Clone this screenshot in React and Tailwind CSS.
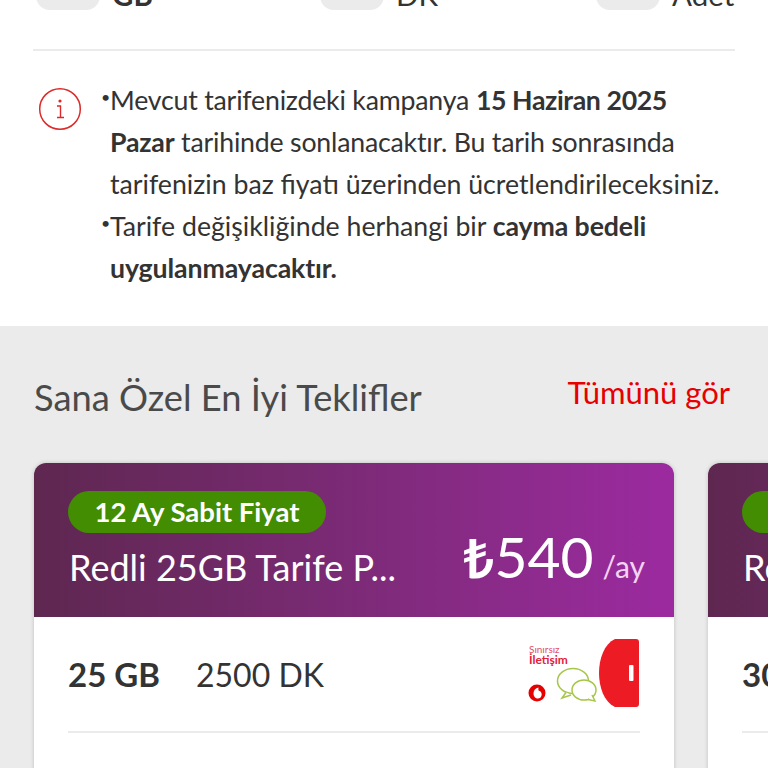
const FONT = 'font-["Lato","Noto_Sans",sans-serif]';

const STATS = [
  { id: 'gb', label: 'GB', bold: true, left: 'w-[284px]' },
  { id: 'dk', label: 'DK', bold: false, left: 'w-[276px]' },
  { id: 'adet', label: 'Adet', bold: false, left: 'w-auto' },
];

function InfoIcon() {
  return (
    <svg width="44" height="44" viewBox="0 0 44 44" fill="none" className="shrink-0">
      <circle cx="22" cy="22" r="20.3" stroke="#dc2a2a" strokeWidth="1.5" />
      <circle cx="22" cy="14" r="1.6" fill="#dc2a2a" />
      <path d="M19 19h3.5v11.5M19 30.5h7" stroke="#dc2a2a" strokeWidth="1.4" />
    </svg>
  );
}

function PlanArt() {
  return (
    <div className="relative w-[112px] h-[72px] shrink-0">
      <div className="absolute left-[1px] top-[6px] text-[10px] leading-[10px] text-[#e4506a]">Sınırsız</div>
      <div className="absolute left-[1px] top-[16px] text-[12px] leading-[12px] font-bold text-[#e4203a]">İletişim</div>
      <svg width="112" height="72" viewBox="0 0 112 72" fill="none" className="absolute left-0 top-0">
        <circle cx="9" cy="55" r="8.500" fill="#e60000" />
        <path d="M10.500 49.500c-3 .5-5 3-5 6 0 2.800 1.800 5 4.200 5 2.300 0 4-1.900 4-4.100 0-2.200-1.400-3.500-3.200-3.900-.2-1.100-.2-2.200 0-3z" fill="#fff" />
        <ellipse cx="45" cy="43" rx="15.500" ry="12.500" stroke="#a8c64a" strokeWidth="1.500" fill="#fff" />
        <path d="M38 54.500 34 60l9-3" stroke="#a8c64a" strokeWidth="1.500" fill="#fff" />
        <ellipse cx="56" cy="52" rx="12" ry="10" stroke="#a8c64a" strokeWidth="1.500" fill="#fff" />
        <path d="M60 61.500 67 63l-3-6" stroke="#a8c64a" strokeWidth="1.500" fill="#fff" />
        <path d="M87 1h21a3 3 0 0 1 3 3v62a3 3 0 0 1-3 3H87C76 64 71 49 71 35S76 6 87 1z" fill="#ed1c24" />
        <rect x="101" y="27" width="4.500" height="16" rx="1" fill="#fff" />
      </svg>
    </div>
  );
}

function PlanCard({ name, price, gb, dk, className }) {
  return (
    <div className={`shrink-0 h-[400px] bg-white rounded-t-xl overflow-hidden shadow-[0_0_4px_rgba(0,0,0,0.18)] ${className}`}>
      <div className="h-[154px] pl-[35px] pr-[29px] pt-[28px] bg-gradient-to-r from-[#5e2750] to-[#9c2aa0] text-white">
        <div className="-ml-[1px] w-[258px] h-[42px] rounded-full bg-[#428d02] flex items-center justify-center text-[27.500px] font-bold leading-none">
          12 Ay Sabit Fiyat
        </div>
        <div className="flex items-baseline justify-between mt-[1px]">
          <span className="text-[36px] leading-[48px]">{name}</span>
          <span className="flex items-baseline -translate-y-[3px]">
            <span className="text-[57px] leading-[50px]">
              <span className='font-["Noto_Sans"] font-semibold text-[54px]'>₺</span>
              {price}
            </span>
            <span className="text-[30px] leading-[50px] ml-[9px] text-[#f3d3f3]">/ay</span>
          </span>
        </div>
      </div>
      <div className="px-[34px]">
        <div className="h-[116px] flex items-center justify-between border-b-2 border-[#ebebeb]">
          <div className="flex items-baseline gap-[36px] text-[32px] text-[#333] pt-[2px]">
            <span className="font-bold text-[33px]">{gb}</span>
            <span>{dk}</span>
          </div>
          <PlanArt />
        </div>
      </div>
    </div>
  );
}

export default function App() {
  return (
    <div className={`w-[768px] h-[768px] overflow-hidden bg-[#ebebeb] ${FONT}`}>
      <section className="h-[326px] bg-white">
        <div className="h-[10px] overflow-hidden flex items-end pl-[36px]">
          {STATS.map((s) => (
            <div key={s.id} className={`flex items-end gap-[12px] shrink-0 ${s.left}`}>
              <div className="w-[64px] h-[30px] rounded-[14px] bg-[#ebebeb]" />
              <span className={`text-[29.500px] leading-[30px] text-[#333] ${s.bold ? 'font-bold' : ''}`}>{s.label}</span>
            </div>
          ))}
        </div>
        <div className="mx-[33px] mt-[39px] h-[2px] bg-[#ebebeb]" />
        <div className="flex mt-[28px] pl-[38px]">
          <div className="pt-[8px]">
            <InfoIcon />
          </div>
          <div className="ml-[19px] text-[26.700px] leading-[42px] text-[#333]">
            <div className="flex">
              <span className="w-[9px] shrink-0 text-[16px] -translate-y-[3px]">•</span>
              <p>
                <span className="tracking-[-0.2px]">Mevcut tarifenizdeki kampanya</span>{' '}
                <b className="tracking-[-0.4px]">15 Haziran 2025</b>
                <br />
                <span className="tracking-[-0.2px]">
                  <b>Pazar</b> tarihinde sonlanacaktır. Bu tarih sonrasında
                </span>
                <br />
                tarifenizin baz fiyatı üzerinden ücretlendirileceksiniz.
              </p>
            </div>
            <div className="flex">
              <span className="w-[9px] shrink-0 text-[16px] -translate-y-[3px]">•</span>
              <p>
                Tarife değişikliğinde herhangi bir <b className="tracking-[-0.1px]">cayma bedeli</b>
                <br />
                <b className="tracking-[-0.1px]">uygulanmayacaktır.</b>
              </p>
            </div>
          </div>
        </div>
      </section>
      <section>
        <div className="flex items-start justify-between pl-[34px] pr-[38px] pt-[46px] h-[137px]">
          <h2 className="text-[36.300px] leading-[50px] text-[#4a4a4a]">Sana Özel En İyi Teklifler</h2>
          <span className="text-[31px] leading-[40px] text-[#e60000]">Tümünü gör</span>
        </div>
        <div className="flex gap-[34px] pl-[34px]">
          <PlanCard name="Redli 25GB Tarife P..." price="540" gb="25 GB" dk="2500 DK" className="w-[640px]" />
          <PlanCard name="Redli 30GB Tarife P..." price="640" gb="30 GB" dk="3000 DK" className="w-[640px]" />
        </div>
      </section>
    </div>
  );
}
